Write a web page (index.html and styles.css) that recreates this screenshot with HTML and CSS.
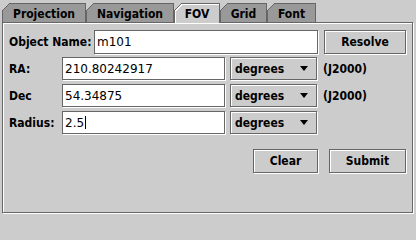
FILE: index.html
```html
<!DOCTYPE html>
<html>
<head>
<meta charset="utf-8">
<title>FOV</title>
<link rel="stylesheet" href="styles.css">
</head>
<body>
<div class="tabs">
  <div class="tab t-proj">Projection</div>
  <div class="tab t-nav">Navigation</div>
  <div class="tab sel t-fov">FOV</div>
  <div class="tab t-grid">Grid</div>
  <div class="tab t-font">Font</div>
</div>
<div class="panel">
  <div class="row row-name">
    <span class="lbl lbl-name">Object Name:</span>
    <div class="field f-name">m101</div>
    <div class="btn b-resolve">Resolve</div>
  </div>
  <div class="row row-coord first">
    <span class="lbl lbl-short">RA:</span>
    <div class="field f-coord">210.80242917</div>
    <div class="combo">degrees<span class="arrow"></span></div>
    <span class="epoch">(J2000)</span>
  </div>
  <div class="row row-coord">
    <span class="lbl lbl-short">Dec</span>
    <div class="field f-coord">54.34875</div>
    <div class="combo">degrees<span class="arrow"></span></div>
    <span class="epoch">(J2000)</span>
  </div>
  <div class="row row-coord">
    <span class="lbl lbl-short">Radius:</span>
    <div class="field f-coord">2.5<span class="caret"></span></div>
    <div class="combo">degrees<span class="arrow"></span></div>
  </div>
  <div class="actions">
    <div class="btn b-clear">Clear</div>
    <div class="btn b-submit">Submit</div>
  </div>
</div>
</body>
</html>
```

FILE: styles.css
```css
html, body {
  margin: 0;
  padding: 0;
}
body {
  width: 416px;
  height: 216px;
  overflow: hidden;
  background: #cccccc;
  color: #000;
  font-family: "DejaVu Sans Condensed", "DejaVu Sans", sans-serif;
  font-stretch: condensed;
  font-size: 12px;
  font-weight: bold;
}

/* ---- tabs ---- */
.tabs {
  position: relative;
  z-index: 1;
  display: flex;
  align-items: flex-end;
  height: 22px;
  padding-left: 2px;
}
.tab {
  position: relative;
  box-sizing: border-box;
  height: 19px;
  border: 1px solid #666;
  border-bottom: 0;
  background: #999999;
  display: flex;
  align-items: center;
  justify-content: center;
  padding-top: 1px;
}
.tab::before {
  content: "";
  position: absolute;
  left: -1px;
  top: -1px;
  width: 8px;
  height: 8px;
  background: linear-gradient(to bottom right,
    #cccccc 0 calc(50% - 0.6px),
    #666 calc(50% - 0.6px) calc(50% + 0.6px),
    #999999 calc(50% + 0.6px));
}
.tab.sel {
  height: 20px;
  margin-bottom: -1px;
  background: #cccccc;
  box-shadow: inset 1px 1px 0 #fff;
}
.tab.sel::before {
  background: linear-gradient(to bottom right,
    #cccccc 0 calc(50% - 0.6px),
    #666 calc(50% - 0.6px) calc(50% + 0.6px),
    #fff calc(50% + 0.6px) calc(50% + 1.8px),
    #cccccc calc(50% + 1.8px));
}
.t-proj { width: 84px; }
.t-nav  { width: 88px; }
.t-fov  { width: 46px; }
.t-grid { width: 47px; }
.t-font { width: 49px; }

/* ---- panel ---- */
.panel {
  box-sizing: border-box;
  width: 411px;
  height: 191px;
  margin-left: 2px;
  border: 1px solid #666;
  box-shadow: inset 1px 1px 0 #fff, 1px 1px 0 #fff;
  padding: 7px 6px 0 6px;
  display: flex;
  flex-direction: column;
}
.row {
  display: flex;
  align-items: center;
  height: 23px;
}
.row-name {
  height: 24px;
}
.row-coord {
  margin-top: 4px;
}
.row-coord.first {
  margin-top: 3px;
}
.lbl {
  flex: none;
}
.lbl-name { width: 85px; }
.lbl-short { width: 53px; }

.field {
  box-sizing: border-box;
  height: 100%;
  background: #fff;
  border: 1px solid #666;
  box-shadow: 1px 1px 0 #fff;
  padding-left: 2px;
  display: flex;
  align-items: center;
  font-family: "DejaVu Sans", sans-serif;
  font-stretch: normal;
  font-weight: normal;
  font-size: 12px;
}
.f-name { width: 224px; }
.f-coord { width: 163px; }
.caret {
  display: inline-block;
  width: 1px;
  height: 13px;
  margin-left: 1px;
  background: #000;
}

.btn, .combo {
  box-sizing: border-box;
  border: 1px solid #666;
  box-shadow: inset 1px 1px 0 #fff, 1px 1px 0 #fff;
  display: flex;
  align-items: center;
}
.btn {
  height: 24px;
  justify-content: center;
}
.b-resolve { width: 82px; margin-left: 6px; }
.combo {
  width: 87px;
  height: 100%;
  margin-left: 5px;
  padding: 0 8px 0 4px;
  justify-content: space-between;
}
.arrow {
  width: 0;
  height: 0;
  border-left: 4px solid transparent;
  border-right: 4px solid transparent;
  border-top: 5px solid #000;
}
.epoch {
  margin-left: 6px;
}
.actions {
  display: flex;
  justify-content: flex-end;
  margin-top: 15px;
}
.b-clear { width: 65px; }
.b-submit { width: 77px; margin-left: 11px; }
```
